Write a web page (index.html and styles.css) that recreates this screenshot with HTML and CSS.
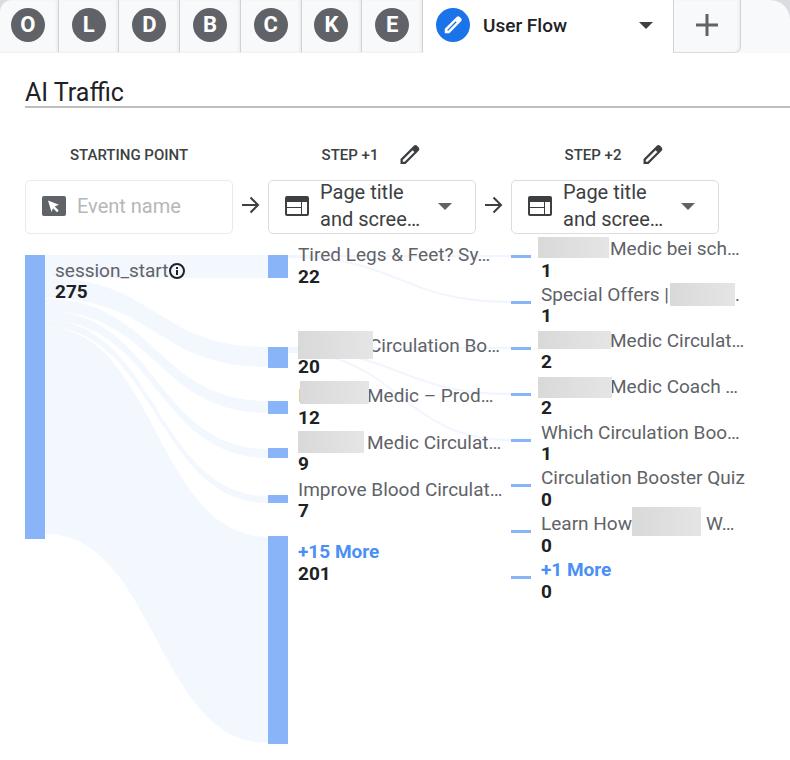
FILE: index.html
```
<!DOCTYPE html>
<html lang="en">
<head>
<meta charset="UTF-8">
<meta name="viewport" content="width=device-width, initial-scale=1.0">
<title>User Flow</title>
<link rel="stylesheet" href="styles.css">
</head>
<body>

<nav class="tab-bar">
    <div class="small-tabs">
        <button class="tab"><span class="badge">O</span></button>
        <button class="tab"><span class="badge">L</span></button>
        <button class="tab"><span class="badge">D</span></button>
        <button class="tab"><span class="badge">B</span></button>
        <button class="tab"><span class="badge">C</span></button>
        <button class="tab"><span class="badge">K</span></button>
        <button class="tab"><span class="badge">E</span></button>
    </div>
    <button class="tab active-tab">
        <span class="badge badge-blue">
            <svg width="22" height="22" viewBox="0 0 24 24"><path fill="#fff" fill-rule="evenodd" d="M3 21v-5L16 3.200a2.400 2.400 0 0 1 3.300 0l1.500 1.500a2.400 2.400 0 0 1 0 3.300L8 21zM6 18.300h.800L16 9.100l-1.100-1.100L6 17.200z"/></svg>
        </span>
        <span class="tab-name">User Flow</span>
        <svg class="caret" width="14" height="7" viewBox="0 0 14 7"><path fill="#3c4043" d="M0 0h14L7 7z"/></svg>
    </button>
    <button class="tab add-tab" aria-label="Add tab">
        <svg width="22" height="22" viewBox="0 0 22 22"><path fill="none" stroke="#5f6368" stroke-width="3" d="M11 0v22M0 11h22"/></svg>
    </button>
</nav>

<main class="exploration">
    <input class="title" type="text" value="AI Traffic" aria-label="Technique name">

    <div class="steps">
        <div class="step">
            <div class="step-head"><label for="start">STARTING POINT</label></div>
            <div class="field field-off">
                <svg class="icon" width="24" height="20" viewBox="0 0 24 20"><rect width="24" height="20" rx="2" fill="#5f6368"/><path fill="#fff" d="M6 4.500l11 4.300-4.300 1.700 4 4-1.700 1.700-4-4L9.500 16z"/></svg>
                <input id="start" class="event-name" type="text" placeholder="Event name" disabled>
            </div>
        </div>

        <svg class="arrow" width="18" height="18" viewBox="0 0 18 18"><path fill="none" stroke="#3c4043" stroke-width="2" d="M0 9h16M8.500 1.500L16 9l-7.500 7.500"/></svg>

        <div class="step">
            <div class="step-head">
                <label for="step1">STEP +1</label>
                <button class="edit" aria-label="Edit step +1">
                    <svg width="24" height="24" viewBox="0 0 24 24"><path fill="#3c4043" fill-rule="evenodd" d="M2.500 21v-5L15.800 2.800a2.400 2.400 0 0 1 3.300 0l1.600 1.600a2.400 2.400 0 0 1 0 3.300L7.500 21zM4.800 18.800h1.800l9.800-9.800-1.800-1.800L4.800 17z"/></svg>
                </button>
            </div>
            <div class="field">
                <svg class="icon" width="24" height="20" viewBox="0 0 24 20"><path fill="#3c4043" fill-rule="evenodd" d="M2 0h20a2 2 0 0 1 2 2v16a2 2 0 0 1-2 2H2a2 2 0 0 1-2-2V2a2 2 0 0 1 2-2zM2 6v5h14V6zM2 12v6h14v-6zM17 6v12h5V6z"/></svg>
                <span class="field-text" aria-hidden="true">Page title<br>and scree…</span>
                <svg class="caret" width="14" height="7" viewBox="0 0 14 7"><path fill="#5f6368" d="M0 0h14L7 7z"/></svg>
                <select id="step1" class="node-type">
                    <option>Page title and screen name</option>
                    <option>Event name</option>
                </select>
            </div>
        </div>

        <svg class="arrow" width="18" height="18" viewBox="0 0 18 18"><path fill="none" stroke="#3c4043" stroke-width="2" d="M0 9h16M8.500 1.500L16 9l-7.500 7.500"/></svg>

        <div class="step">
            <div class="step-head">
                <label for="step2">STEP +2</label>
                <button class="edit" aria-label="Edit step +2">
                    <svg width="24" height="24" viewBox="0 0 24 24"><path fill="#3c4043" fill-rule="evenodd" d="M2.500 21v-5L15.800 2.800a2.400 2.400 0 0 1 3.300 0l1.600 1.600a2.400 2.400 0 0 1 0 3.300L7.500 21zM4.800 18.800h1.800l9.800-9.800-1.800-1.800L4.800 17z"/></svg>
                </button>
            </div>
            <div class="field">
                <svg class="icon" width="24" height="20" viewBox="0 0 24 20"><path fill="#3c4043" fill-rule="evenodd" d="M2 0h20a2 2 0 0 1 2 2v16a2 2 0 0 1-2 2H2a2 2 0 0 1-2-2V2a2 2 0 0 1 2-2zM2 6v5h14V6zM2 12v6h14v-6zM17 6v12h5V6z"/></svg>
                <span class="field-text" aria-hidden="true">Page title<br>and scree…</span>
                <svg class="caret" width="14" height="7" viewBox="0 0 14 7"><path fill="#5f6368" d="M0 0h14L7 7z"/></svg>
                <select id="step2" class="node-type">
                    <option>Page title and screen name</option>
                    <option>Event name</option>
                </select>
            </div>
        </div>
    </div>

    <svg class="flow" width="765" height="526" viewBox="25 234 765 526">
        <defs>
            <linearGradient id="mask">
                <stop offset="0" stop-color="#d9d9d9"/>
                <stop offset="1" stop-color="#e5e5e5"/>
            </linearGradient>
        </defs>

        <!-- start to step +1 -->
        <g class="links">
            <path d="M45 255H268V278H45z"/>
            <path d="M45 278C156 278 156 347 268 347V367C156 367 156 298 45 298z"/>
            <path d="M45 299C156 299 156 401 268 401V413C156 413 156 311 45 311z"/>
            <path d="M45 311C156 311 156 449 268 449V458C156 458 156 320 45 320z"/>
            <path d="M45 320C156 320 156 496 268 496V503C156 503 156 327 45 327z"/>
            <path d="M45 327C156 327 156 537 268 537V743C156 743 156 534 45 534z"/>
        </g>

        <!-- step +1 to step +2 -->
        <g class="thin-links">
            <path d="M288 256H511"/>
            <path d="M288 257C400 257 400 302 511 302"/>
            <path d="M288 348H511"/>
            <path d="M288 350C400 350 400 394 511 394"/>
            <path d="M288 352C400 352 400 440 511 440"/>
        </g>

        <g class="nodes">
            <rect x="25" y="255" width="20" height="284"/>
            <rect x="268" y="255" width="20" height="23"/>
            <rect x="268" y="347" width="20" height="21"/>
            <rect x="268" y="401" width="20" height="13"/>
            <rect x="268" y="448" width="20" height="10"/>
            <rect x="268" y="495" width="20" height="8"/>
            <rect x="268" y="536" width="20" height="208"/>
            <rect x="511" y="255" width="20" height="3"/>
            <rect x="511" y="301" width="20" height="3"/>
            <rect x="511" y="347" width="20" height="3"/>
            <rect x="511" y="393" width="20" height="3"/>
            <rect x="511" y="439" width="20" height="3"/>
            <rect x="511" y="484" width="20" height="3"/>
            <rect x="511" y="530" width="20" height="3"/>
            <rect x="511" y="576" width="20" height="3"/>
        </g>

        <text class="name" x="55" y="277">session_start</text>
        <text class="count" x="55" y="298">275</text>
        <circle cx="177" cy="271" r="7" fill="none" stroke="#202124" stroke-width="2"/>
        <path d="M177 270v5M177 267v2" stroke="#202124" stroke-width="2"/>

        <text class="name" x="298" y="261">Tired Legs &amp; Feet? Sy…</text>
        <text class="count" x="298" y="283">22</text>
        <text class="name" x="369" y="352">Circulation Bo…</text>
        <text class="count" x="298" y="373">20</text>
        <text class="name" x="298" y="402">I</text>
        <text class="name" x="367" y="402">Medic – Prod…</text>
        <text class="count" x="298" y="424">12</text>
        <text class="name" x="367" y="449">Medic Circulat…</text>
        <text class="count" x="298" y="470">9</text>
        <text class="name" x="298" y="496">Improve Blood Circulat…</text>
        <text class="count" x="298" y="517">7</text>
        <a href="#"><text class="more" x="298" y="558">+15 More</text></a>
        <text class="count" x="298" y="580">201</text>

        <text class="name" x="610" y="255">Medic bei sch…</text>
        <text class="count" x="541" y="277">1</text>
        <text class="name" x="541" y="301">Special Offers |</text>
        <text class="name" x="735" y="301">.</text>
        <text class="count" x="541" y="322">1</text>
        <text class="name" x="610" y="347">Medic Circulat…</text>
        <text class="count" x="541" y="368">2</text>
        <text class="name" x="610" y="393">Medic Coach …</text>
        <text class="count" x="541" y="414">2</text>
        <text class="name" x="541" y="439">Which Circulation Boo…</text>
        <text class="count" x="541" y="460">1</text>
        <text class="name" x="541" y="484">Circulation Booster Quiz</text>
        <text class="count" x="541" y="506">0</text>
        <text class="name" x="541" y="530">Learn How</text>
        <text class="name" x="706" y="530">W…</text>
        <text class="count" x="541" y="552">0</text>
        <a href="#"><text class="more" x="541" y="576">+1 More</text></a>
        <text class="count" x="541" y="598">0</text>

        <!-- hidden brand names -->
        <g fill="url(#mask)">
            <rect x="298" y="331" width="75" height="28"/>
            <rect x="300" y="381" width="69" height="23"/>
            <rect x="298" y="431" width="66" height="22"/>
            <rect x="538" y="237" width="71" height="21"/>
            <rect x="670" y="283" width="65" height="23"/>
            <rect x="538" y="331" width="73" height="18"/>
            <rect x="538" y="377" width="74" height="21"/>
            <rect x="632" y="507" width="69" height="29"/>
        </g>
    </svg>
</main>

</body>
</html>
```
FILE: styles.css
```
body {
    margin: 0;
    background-color: #fff;
    font-family: Roboto, sans-serif;
    color: #202124;
    overflow-x: hidden;
}

button {
    padding: 0;
    border: none;
    background: none;
    font-family: inherit;
    cursor: pointer;
}

/* Tabs */
.tab-bar {
    display: flex;
    height: 53px;
    border-radius: 12px 20px 0 0;
    background-color: #f8f9fa;
    box-shadow: 0 0 0 20px #dadce0;
    clip-path: inset(0);
    overflow: hidden;
}

.small-tabs {
    display: flex;
    flex: 0 0 425px;
    margin-left: -2px;
}

.tab {
    box-sizing: border-box;
    display: flex;
    align-items: center;
    justify-content: center;
    flex: 1;
    padding-bottom: 3px;
    border-right: 1px solid #d0d2d4;
    border-bottom: 1px solid #f1f2f3;
    box-shadow: inset -2px 0 2px #eeeff0;
}

.badge {
    display: flex;
    align-items: center;
    justify-content: center;
    width: 34px;
    height: 34px;
    border-radius: 50%;
    background-color: #5f6368;
    color: #fff;
    font-size: 22px;
    font-weight: 700;
}

.badge-blue {
    background-color: #1a73e8;
}

.active-tab {
    flex: 0 0 251px;
    justify-content: flex-start;
    gap: 13px;
    padding-left: 13px;
    padding-right: 20px;
    border-bottom: none;
    background-color: #fff;
    box-shadow: none;
}

.tab-name {
    font-size: 19px;
    font-weight: 500;
    color: #202124;
}

.caret {
    margin-left: auto;
}

.add-tab {
    flex: 0 0 67px;
    border-radius: 0 0 6px 0;
    border-bottom-color: #dadce0;
}

/* Exploration */
.exploration {
    padding: 23px 0 0 25px;
}

.title {
    box-sizing: border-box;
    display: block;
    width: 100%;
    height: 32px;
    padding: 2px 0 0;
    border: none;
    border-bottom: 2px solid #bdbdbd;
    outline: none;
    font-family: inherit;
    font-size: 25px;
    color: #202124;
}

.steps {
    display: flex;
    align-items: flex-end;
    margin-top: 31px;
}

.step {
    flex: 0 0 208px;
}

.step-head {
    display: flex;
    align-items: center;
    justify-content: center;
    gap: 20px;
    height: 32px;
    margin-bottom: 9px;
    font-size: 15px;
    font-weight: 500;
    color: #3c4043;
}

.edit {
    display: flex;
}

.field {
    box-sizing: border-box;
    position: relative;
    display: flex;
    align-items: center;
    height: 54px;
    padding: 0 23px 2px 16px;
    border: 1px solid #dadce0;
    border-radius: 5px;
}

.field-off {
    padding-right: 8px;
    border-color: #e8eaed;
}

.icon {
    flex: none;
}

.field-text {
    margin-left: 11px;
    font-size: 20px;
    font-weight: 400;
    line-height: 27px;
    color: #3c4043;
}

.event-name {
    width: 100%;
    min-width: 0;
    margin-left: 11px;
    padding: 0;
    border: none;
    background: none;
    font-family: inherit;
    font-size: 20px;
}

.event-name::placeholder {
    color: #b5b7b9;
}

/* The select lies over the two line label */
.node-type {
    position: absolute;
    inset: 0;
    width: 100%;
    opacity: 0;
    cursor: pointer;
}

.arrow {
    flex: 0 0 18px;
    margin: 0 8px 20px 9px;
}

/* Flow chart */
.flow {
    display: block;
}

.links {
    fill: #f3f7fe;
}

.thin-links {
    fill: none;
    stroke: #f1f5fe;
    stroke-width: 2;
}

.nodes {
    fill: #8ab4f8;
}

.name {
    font-size: 19px;
    fill: #5f6368;
}

.count {
    font-size: 19px;
    font-weight: 700;
    fill: #202124;
}

.more {
    font-size: 19px;
    font-weight: 700;
    fill: #4a90f4;
}
```
